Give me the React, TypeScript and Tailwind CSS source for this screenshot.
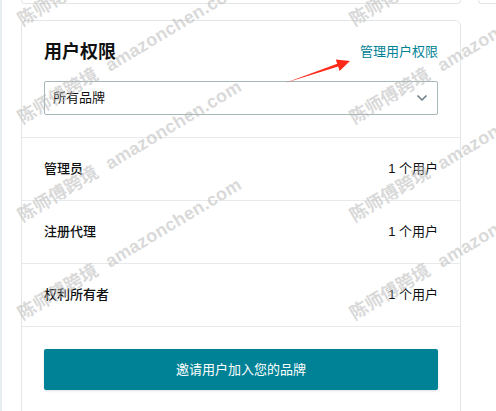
import React from 'react';

const rows = [
  { role: '管理员', count: '1 个用户' },
  { role: '注册代理', count: '1 个用户' },
  { role: '权利所有者', count: '1 个用户' },
];

// watermark lines: bottom-left anchor of each rotated line
const marks = [24, 356].flatMap((x) => [29, 127, 225, 323].map((y) => ({ x, y })));

export default function App() {
  return (
    <div className="relative w-[496px] h-[411px] overflow-hidden bg-white flex font-['Liberation_Sans','Noto_Sans_CJK_SC',sans-serif] text-[#0f1111]">
      <div className="w-[2px] h-full bg-[#e8eef0] shrink-0" />

      <div className="flex-1 pl-[19px]">
        {/* bottoms of the cards above */}
        <div className="flex gap-[17px]">
          <div className="w-[440px] h-[4px] border border-t-0 border-[#e3e6e6] rounded-b-[6px]" />
          <div className="flex-1 h-[4px] border border-t-0 border-r-0 border-[#e3e6e6] rounded-bl-[6px]" />
        </div>

        <div className="mt-[16px] w-[440px] border border-[#e3e6e6] rounded-[6px] bg-white">
          <div className="px-[22px] pt-[20px] pb-[22px]">
            <div className="flex items-center justify-between h-[22px]">
              <h2 className="text-[18px] leading-[22px] font-bold">用户权限</h2>
              <a className="text-[13px] leading-[22px] text-[#008296] cursor-pointer">管理用户权限</a>
            </div>

            <div className="mt-[18px] h-[34px] border border-[#a6b7b9] rounded-[2px] flex items-center justify-between pl-[8px] pr-[8px]">
              <span className="text-[13px]">所有品牌</span>
              <svg width="12" height="8" viewBox="0 0 12 8" className="mr-[1px]">
                <polyline points="1.5,1.5 6,6 10.5,1.5" fill="none" stroke="#6a7a82" strokeWidth="1.5" />
              </svg>
            </div>
          </div>

          {rows.map((r) => (
            <div key={r.role} className="border-t border-[#e7e9ea] h-[63px] px-[22px] flex items-center justify-between text-[13px]">
              <span className="font-medium">{r.role}</span>
              <span>{r.count}</span>
            </div>
          ))}

          <div className="border-t border-[#e7e9ea] px-[22px] pt-[22px] pb-[30px]">
            <button className="w-full h-[41px] bg-[#008296] text-white text-[13px] rounded-[2px] shadow-sm">
              邀请用户加入您的品牌
            </button>
          </div>
        </div>
      </div>

      {/* red annotation arrow */}
      <svg className="absolute left-0 top-0 pointer-events-none" width="496" height="411">
        <polygon
          points="285,83 337.2,63.8 335.8,59.5 350,61 339.6,70.9 338.2,66.6"
          fill="#ff2a1a"
        />
      </svg>

      {/* watermark */}
      {marks.map((m, i) => (
        <div
          key={i}
          className="absolute pointer-events-none whitespace-nowrap origin-bottom-left rotate-[-31deg] text-[18px] leading-[18px] font-bold text-[rgba(185,185,185,0.55)]"
          style={{ left: m.x, top: m.y - 18 }}
        >
          <span>陈师傅跨境</span>
          <span className="ml-[12px] tracking-[0.3px]">amazonchen.com</span>
        </div>
      ))}
    </div>
  );
}
